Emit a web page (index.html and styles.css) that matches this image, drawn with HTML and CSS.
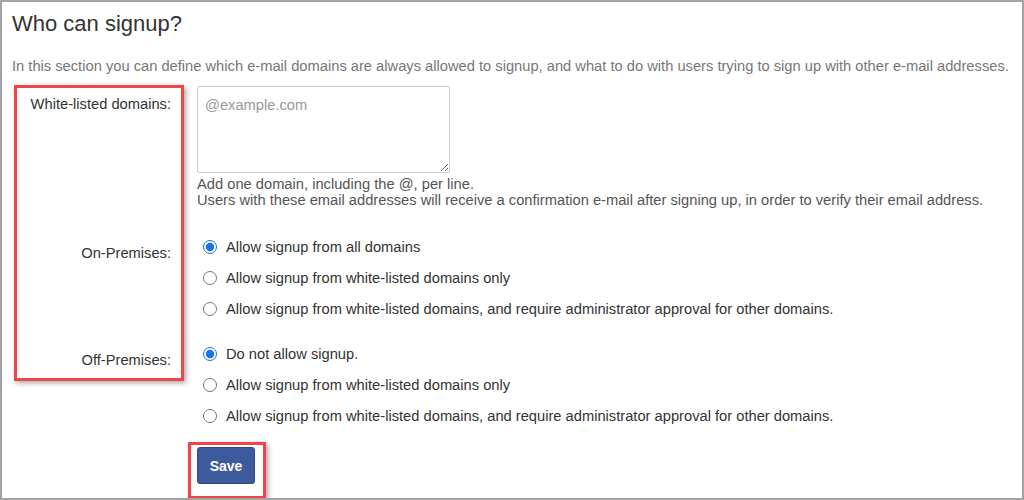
FILE: index.html
```html
<!DOCTYPE html>
<html lang="en">
<head>
    <meta charset="UTF-8">
    <title>Who can signup?</title>
    <link rel="stylesheet" href="styles.css">
</head>
<body>
    <div class="frame">
        <h1 class="page-title">Who can signup?</h1>
        <p class="intro">In this section you can define which e-mail domains are always allowed to signup, and what to do with users trying to sign up with other e-mail addresses.</p>

        <div class="signup-form">
            <label class="field-label label-domains" for="domains">White-listed domains:</label>
            <div class="field">
                <textarea id="domains" class="domains-input" placeholder="@example.com"></textarea>
                <div class="help-text">
                    Add one domain, including the @, per line.<br>
                    Users with these email addresses will receive a confirmation e-mail after signing up, in order to verify their email address.
                </div>
            </div>

            <div class="field-label label-radio">On-Premises:</div>
            <div class="radio-group group-on">
                <label class="radio-option"><input type="radio" name="onprem" checked> Allow signup from all domains</label>
                <label class="radio-option"><input type="radio" name="onprem"> Allow signup from white-listed domains only</label>
                <label class="radio-option"><input type="radio" name="onprem"> Allow signup from white-listed domains, and require administrator approval for other domains.</label>
            </div>

            <div class="field-label label-radio label-off">Off-Premises:</div>
            <div class="radio-group group-off">
                <label class="radio-option"><input type="radio" name="offprem" checked> Do not allow signup.</label>
                <label class="radio-option"><input type="radio" name="offprem"> Allow signup from white-listed domains only</label>
                <label class="radio-option"><input type="radio" name="offprem"> Allow signup from white-listed domains, and require administrator approval for other domains.</label>
            </div>

            <div></div>
            <div class="actions">
                <button class="btn-save">Save</button>
            </div>
        </div>

        <!-- annotation boxes -->
        <div class="mark mark-labels"></div>
        <div class="mark mark-save"></div>
    </div>
</body>
</html>
```

FILE: styles.css
```css
* {
    box-sizing: border-box;
    margin: 0;
    padding: 0;
}

body {
    font-family: 'Liberation Sans', Arial, sans-serif;
    font-size: 14.7px;
    color: #333;
    background: #fff;
}

.frame {
    position: relative;
    width: 1024px;
    height: 500px;
    border: 2px solid #a3a3a3;
    padding: 9px 10px 0 10px;
    overflow: hidden;
}

.page-title {
    font-size: 22px;
    font-weight: normal;
    line-height: 26px;
    color: #333;
}

.intro {
    margin-top: 19px;
    line-height: 20px;
    color: #777;
    white-space: nowrap;
}

.signup-form {
    display: grid;
    grid-template-columns: 159px 1fr;
    column-gap: 26px;
    margin-top: 10px;
}

.field-label {
    text-align: right;
    line-height: 20px;
    color: #333;
}

.label-domains {
    padding-top: 8px;
}

.label-radio {
    padding-top: 12px;
    margin-top: 23px;
}

.label-off {
    margin-top: 14px;
}

.domains-input {
    display: block;
    width: 253px;
    height: 87px;
    border: 1px solid #ccc;
    border-radius: 2px;
    padding: 8px 7px;
    font-family: inherit;
    font-size: 14.7px;
    line-height: 20px;
    color: #333;
    resize: vertical;
}

.domains-input::placeholder {
    color: #999;
}

.help-text {
    margin-top: 3px;
    line-height: 16px;
    color: #555;
    white-space: nowrap;
}

.radio-group {
    display: flex;
    flex-direction: column;
}

.group-on {
    margin-top: 23px;
}

.group-off {
    margin-top: 14px;
}

.radio-option {
    display: flex;
    align-items: center;
    height: 31px;
    color: #333;
    white-space: nowrap;
}

.radio-option input {
    width: 14px;
    height: 14px;
    margin: 0 9px 0 6px;
    accent-color: #1a73e8;
}

.actions {
    margin-top: 16px;
}

.btn-save {
    width: 58px;
    height: 37px;
    border: 1px solid #2f4a85;
    border-radius: 3px;
    background-color: #3d5a9c;
    color: #fff;
    font-family: inherit;
    font-size: 14px;
    font-weight: bold;
}

.mark {
    position: absolute;
    border: 3px solid #ef4449;
    box-shadow: 2px 2px 5px rgba(0, 0, 0, 0.35);
}

.mark-labels {
    left: 12px;
    top: 83px;
    width: 170px;
    height: 296px;
}

.mark-save {
    left: 186px;
    top: 440px;
    width: 78px;
    height: 57px;
}
```
